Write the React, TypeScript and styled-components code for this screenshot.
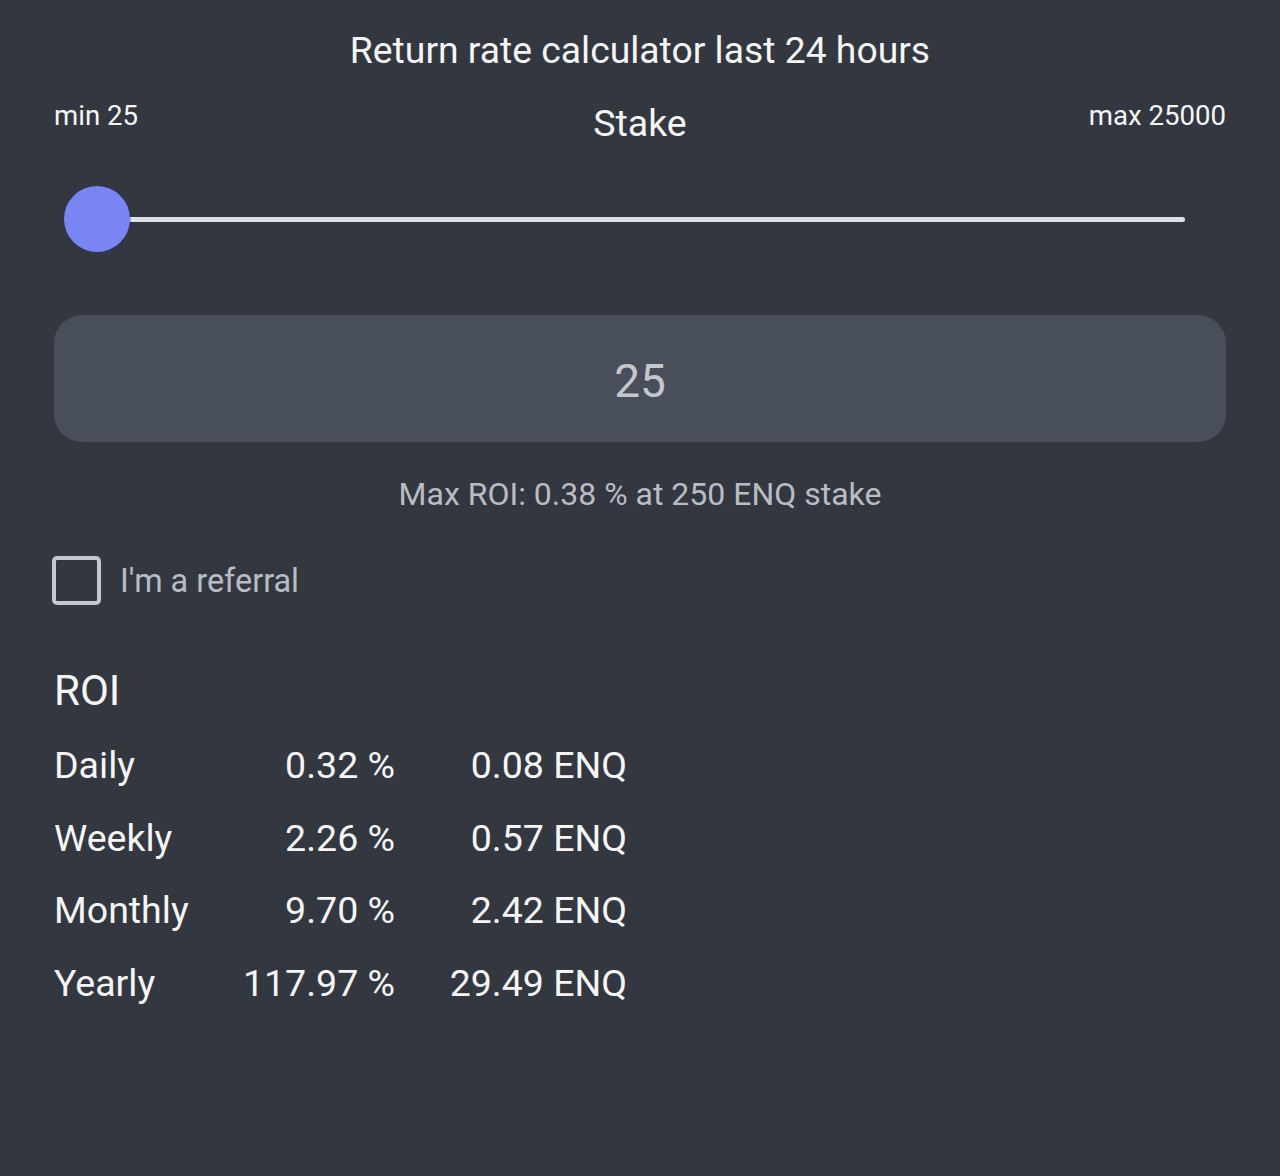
import React from 'react';
import styled, { createGlobalStyle } from 'styled-components';

const GlobalStyle = createGlobalStyle`
  html, body {
    margin: 0;
    padding: 0;
    background: #333840;
  }
  body {
    font-family: Roboto, "Noto Sans", "Liberation Sans", sans-serif;
    color: #f3f4f5;
  }
`;

const Page = styled.div`
  min-height: 1176px;
  box-sizing: border-box;
  padding: 29px 54px 0;
  background: #333840;
`;

const Title = styled.h1`
  margin: 0;
  font-size: 37.3px;
  line-height: 42px;
  font-weight: 400;
  text-align: center;
  color: #f5f5f6;
`;

const RangeHeader = styled.div`
  margin-top: 29px;
  display: flex;
  justify-content: space-between;
  align-items: flex-start;
`;

const Limit = styled.span<{ $align?: string }>`
  font-size: 27.6px;
  line-height: 32px;
  color: #f5f5f6;
  width: 160px;
  text-align: ${(p) => p.$align || 'left'};
`;

const StakeLabel = styled.span`
  padding-top: 2px;
  font-size: 37.5px;
  line-height: 42px;
  color: #f5f5f6;
`;

// slider
const SliderBox = styled.div`
  margin: 42px 0 0;
  padding: 0 41px 0 10px;
  height: 66px;
  display: flex;
  align-items: center;
`;

const Track = styled.div`
  position: relative;
  flex: 1;
  height: 5px;
  margin-left: 33px;
  border-radius: 3px;
  background: #dde1e4;
`;

const Thumb = styled.div`
  position: absolute;
  top: 50%;
  width: 66px;
  height: 66px;
  margin: -33px 0 0 -33px;
  border-radius: 50%;
  background: #7a85f4;
  box-shadow: 0 0 0 1px rgba(40, 48, 120, 0.35);
`;

const StakeInput = styled.div`
  margin-top: 63px;
  padding-top: 4px;
  box-sizing: border-box;
  height: 127px;
  border-radius: 28px;
  background: #484e5a;
  display: flex;
  align-items: center;
  justify-content: center;
  font-size: 46px;
  color: #c3c7cd;
`;

const Hint = styled.p`
  margin: 34px 0 0;
  font-size: 32px;
  line-height: 36px;
  text-align: center;
  color: #b9bdc3;
`;

const CheckRow = styled.label`
  margin-top: 44px;
  display: flex;
  align-items: center;
  gap: 19px;
  margin-left: -2px;
`;

const Box = styled.span`
  box-sizing: border-box;
  width: 49px;
  height: 49px;
  border: 4px solid #c4c8cd;
  border-radius: 5px;
`;

const CheckLabel = styled.span`
  font-size: 32.4px;
  color: #b9bdc3;
`;

const RoiTitle = styled.h2`
  margin: 62px 0 0;
  font-size: 42px;
  line-height: 48px;
  font-weight: 400;
  color: #f5f5f6;
`;

const RoiTable = styled.div`
  margin-top: 15px;
  display: grid;
  grid-template-columns: 160px 181px 232px;
  grid-auto-rows: 72.6px;
  align-items: center;
  width: fit-content;
`;

const Cell = styled.span<{ $right?: boolean }>`
  font-size: 37.5px;
  line-height: 44px;
  padding-bottom: 2px;
  color: #f5f5f6;
  text-align: ${(p) => (p.$right ? 'right' : 'left')};
`;

const rows = [
  ['Daily', '0.32 %', '0.08 ENQ'],
  ['Weekly', '2.26 %', '0.57 ENQ'],
  ['Monthly', '9.70 %', '2.42 ENQ'],
  ['Yearly', '117.97 %', '29.49 ENQ'],
];

export default function App() {
  const min = 25;
  const max = 25000;
  const value = 25;
  const pct = ((value - min) / (max - min)) * 100;

  return (
    <>
      <GlobalStyle />
      <Page>
        <Title>Return rate calculator last 24 hours</Title>
        <RangeHeader>
          <Limit>min {min}</Limit>
          <StakeLabel>Stake</StakeLabel>
          <Limit $align="right">max {max}</Limit>
        </RangeHeader>
        <SliderBox>
          <Track>
            <Thumb style={{ left: `${pct}%` }} />
          </Track>
        </SliderBox>
        <StakeInput>{value}</StakeInput>
        <Hint>Max ROI: 0.38 % at 250 ENQ stake</Hint>
        <CheckRow>
          <Box />
          <CheckLabel>I'm a referral</CheckLabel>
        </CheckRow>
        <RoiTitle>ROI</RoiTitle>
        <RoiTable>
          {rows.map(([name, rate, amount]) => (
            <React.Fragment key={name}>
              <Cell>{name}</Cell>
              <Cell $right>{rate}</Cell>
              <Cell $right>{amount}</Cell>
            </React.Fragment>
          ))}
        </RoiTable>
      </Page>
    </>
  );
}
